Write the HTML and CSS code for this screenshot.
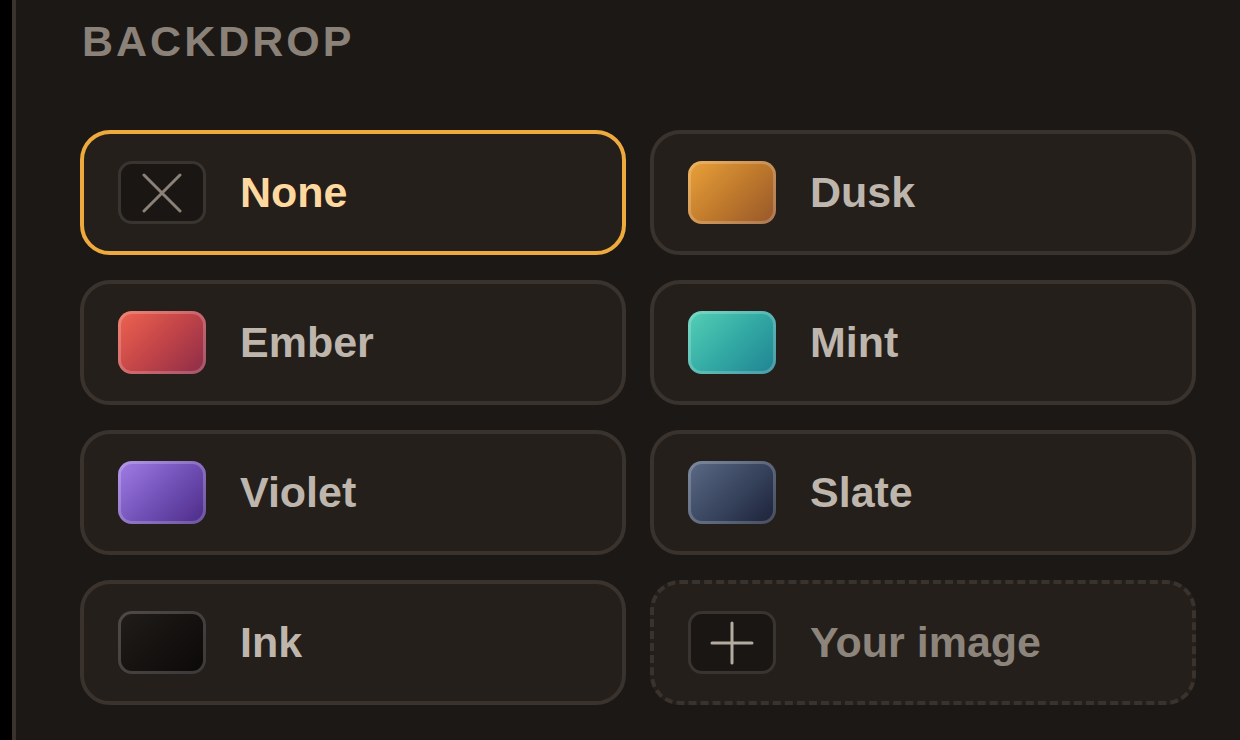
FILE: index.html
```html
<!DOCTYPE html>
<html lang="en">
<head>
  <meta charset="UTF-8">
  <meta name="viewport" content="width=device-width, initial-scale=1.0">
  <title>Backdrop</title>
  <link rel="stylesheet" href="styles.css">
</head>
<body>

  <!-- Backdrop picker panel -->
  <div class="panel">
    <div class="section-title">BACKDROP</div>

    <div class="backdrop-grid">
      <button class="option selected">
        <span class="swatch swatch-none">
          <svg viewBox="0 0 40 40" width="40" height="40">
            <path d="M2 2 L38 38 M38 2 L2 38" stroke="#8a8178" stroke-width="3" stroke-linecap="round" fill="none"/>
          </svg>
        </span>
        <span class="label">None</span>
      </button>

      <button class="option">
        <span class="swatch swatch-dusk"></span>
        <span class="label">Dusk</span>
      </button>

      <button class="option">
        <span class="swatch swatch-ember"></span>
        <span class="label">Ember</span>
      </button>

      <button class="option">
        <span class="swatch swatch-mint"></span>
        <span class="label">Mint</span>
      </button>

      <button class="option">
        <span class="swatch swatch-violet"></span>
        <span class="label">Violet</span>
      </button>

      <button class="option">
        <span class="swatch swatch-slate"></span>
        <span class="label">Slate</span>
      </button>

      <button class="option">
        <span class="swatch swatch-ink"></span>
        <span class="label">Ink</span>
      </button>

      <!-- Upload your own -->
      <button class="option upload">
        <span class="swatch swatch-none">
          <svg viewBox="0 0 44 44" width="44" height="44">
            <path d="M22 2 L22 42 M2 22 L42 22" stroke="#b3aaa0" stroke-width="3" stroke-linecap="round" fill="none"/>
          </svg>
        </span>
        <span class="label">Your image</span>
      </button>
    </div>
  </div>

</body>
</html>
```

FILE: styles.css
```css
body {
  margin: 0;
  padding: 0;
  background: #000;
  font-family: 'Liberation Sans', Arial, sans-serif;
  height: 100vh;
  overflow: hidden;
}

.panel {
  margin-left: 12px;
  height: 100vh;
  box-sizing: border-box;
  background: #1c1815;
  border-left: 4px solid #3a332d;
  padding: 20px 44px 0 64px;
}

.section-title {
  font-size: 43px;
  line-height: 1;
  font-weight: bold;
  letter-spacing: 3px;
  color: #8a8178;
  padding-left: 2px;
  margin-bottom: 67px;
}

.backdrop-grid {
  display: grid;
  grid-template-columns: 546px 546px;
  column-gap: 24px;
  row-gap: 25px;
}

.option {
  display: flex;
  align-items: center;
  gap: 34px;
  height: 125px;
  box-sizing: border-box;
  padding: 0 34px;
  background: #241f1b;
  border: 4px solid #3a332d;
  border-radius: 30px;
  font-family: inherit;
  cursor: pointer;
  text-align: left;
}

.option.selected {
  border-color: #efaa3d;
}

.option.upload {
  border-style: dashed;
}

.label {
  font-size: 43px;
  font-weight: bold;
  color: #beb6ad;
}

.selected .label {
  color: #fed89f;
}

.upload .label {
  color: #8d857b;
}

/* Colour swatches */
.swatch {
  width: 88px;
  height: 63px;
  flex: none;
  box-sizing: border-box;
  border-radius: 14px;
  box-shadow: inset 0 0 0 3px rgba(255, 255, 255, 0.2);
  display: flex;
  align-items: center;
  justify-content: center;
}

.swatch-none {
  background: #1a1613;
  box-shadow: none;
  border: 3px solid #3a3430;
}

.swatch-dusk {
  background: linear-gradient(135deg, #eba23a, #c07a2c 50%, #96562a);
}

.swatch-ember {
  background: linear-gradient(135deg, #ef6450, #c24448 50%, #8a2c48);
}

.swatch-mint {
  background: linear-gradient(135deg, #55d0b6, #33aaa4 50%, #1f8292);
}

.swatch-violet {
  background: linear-gradient(135deg, #a07ee6, #7352b8 50%, #4a2a86);
}

.swatch-slate {
  background: linear-gradient(135deg, #5c6b86, #3a4660 50%, #1b2138);
}

.swatch-ink {
  background: linear-gradient(135deg, #221d1a, #151210 50%, #0b0908);
}
```
